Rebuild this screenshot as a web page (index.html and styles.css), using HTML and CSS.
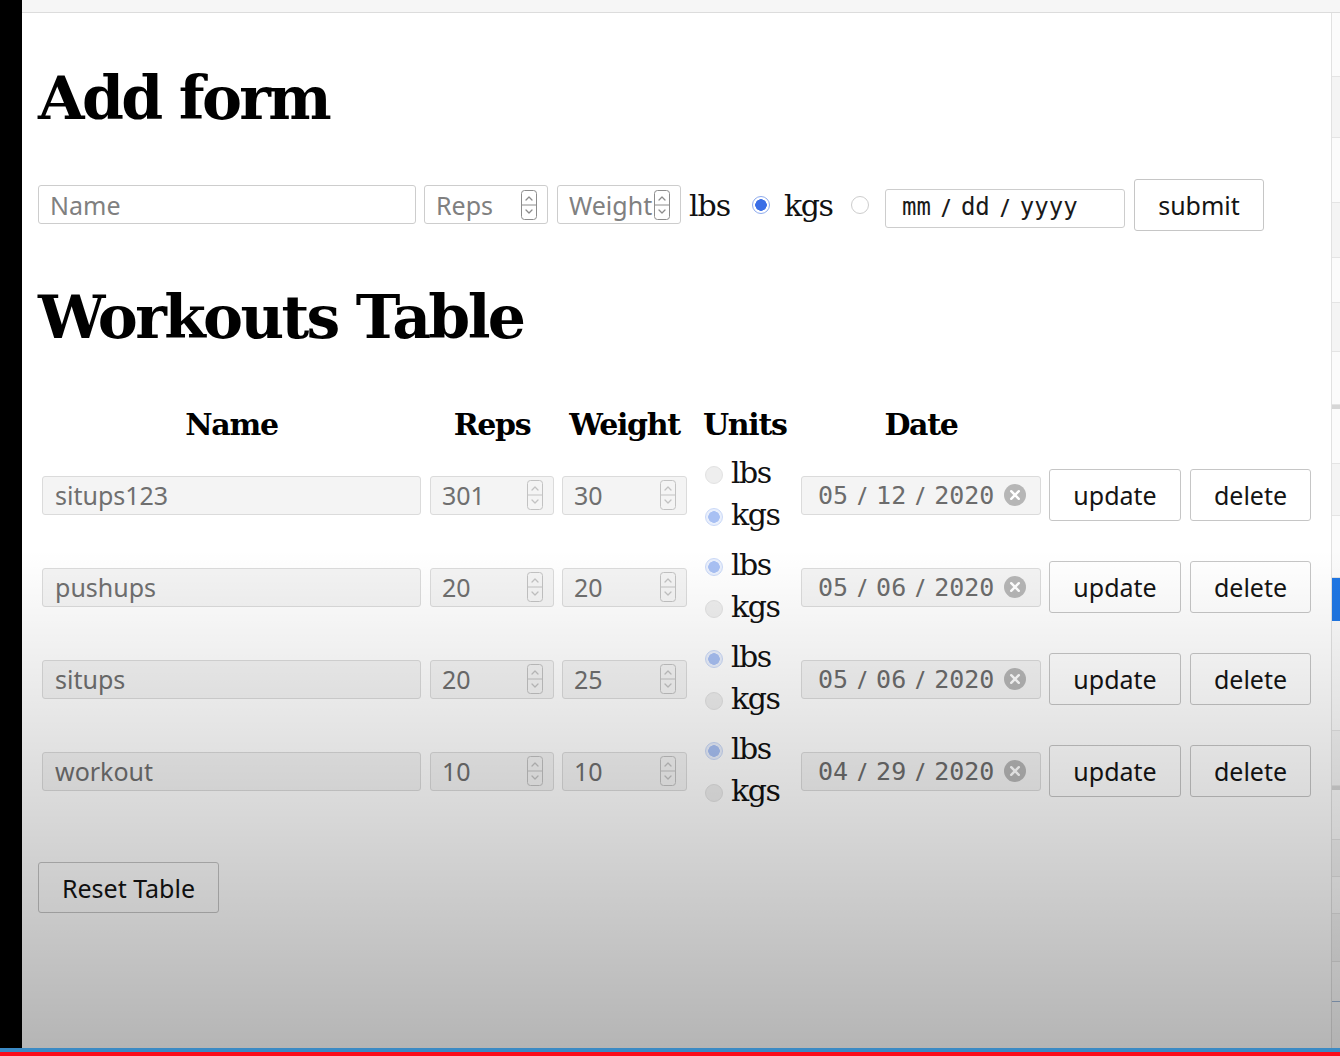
FILE: index.html
```html
<!DOCTYPE html>
<html lang="en">
<head>
<meta charset="utf-8">
<title>Workouts</title>
<link rel="stylesheet" href="styles.css">
</head>
<body>
<div class="screen">
  <div class="stage">
    <div class="leftbar"></div>
    <div class="window">
      <div class="toolbar"></div>
      <div class="viewport">
        <main class="page">
          <h1 class="title title-add">Add form</h1>
          <form class="add-form">
            <input class="field f-name" type="text" placeholder="Name">
            <div class="field num f-reps">
              <input class="num-input" type="text" placeholder="Reps">
              <svg class="spin" viewBox="0 0 16 30" width="16" height="30"><rect x="0.5" y="0.5" width="15" height="29" rx="3"/><line x1="0.5" y1="15" x2="15.5" y2="15"/><polyline points="5,10 8,7 11,10"/><polyline points="5,20 8,23 11,20"/></svg>
            </div>
            <div class="field num f-weight">
              <input class="num-input" type="text" placeholder="Weight">
              <svg class="spin" viewBox="0 0 16 30" width="16" height="30"><rect x="0.5" y="0.5" width="15" height="29" rx="3"/><line x1="0.5" y1="15" x2="15.5" y2="15"/><polyline points="5,10 8,7 11,10"/><polyline points="5,20 8,23 11,20"/></svg>
            </div>
            <span class="unit-label u-lbs">lbs</span>
            <input class="radio r-lbs" type="radio" name="unit" checked>
            <span class="unit-label u-kgs">kgs</span>
            <input class="radio r-kgs" type="radio" name="unit">
            <div class="field date f-date">
              <span class="seg">mm</span><span class="sep">/</span><span class="seg">dd</span><span class="sep">/</span><span class="seg">yyyy</span>
            </div>
            <button class="btn b-submit" type="button">submit</button>
          </form>

          <h1 class="title title-table">Workouts Table</h1>

          <div class="table">
            <div class="th c-name">Name</div>
            <div class="th c-reps">Reps</div>
            <div class="th c-weight">Weight</div>
            <div class="th c-units">Units</div>
            <div class="th c-date">Date</div>
            <div class="th"></div>
            <div class="th"></div>

            <input class="field dis c-name" type="text" value="situps123" disabled>
            <div class="field num dis c-reps"><input class="num-input" type="text" value="301" disabled><svg class="spin" viewBox="0 0 16 30" width="16" height="30"><rect x="0.5" y="0.5" width="15" height="29" rx="3"/><line x1="0.5" y1="15" x2="15.5" y2="15"/><polyline points="5,10 8,7 11,10"/><polyline points="5,20 8,23 11,20"/></svg></div>
            <div class="field num dis c-weight"><input class="num-input" type="text" value="30" disabled><svg class="spin" viewBox="0 0 16 30" width="16" height="30"><rect x="0.5" y="0.5" width="15" height="29" rx="3"/><line x1="0.5" y1="15" x2="15.5" y2="15"/><polyline points="5,10 8,7 11,10"/><polyline points="5,20 8,23 11,20"/></svg></div>
            <div class="units"><label class="uline"><input class="radio dis" type="radio" name="u1" disabled>lbs</label><label class="uline"><input class="radio dis" type="radio" name="u1" checked disabled>kgs</label></div>
            <div class="field date dis c-date"><span class="seg">05</span><span class="sep">/</span><span class="seg">12</span><span class="sep">/</span><span class="seg">2020</span><svg class="clear" viewBox="0 0 22 22" width="22" height="22"><circle cx="11" cy="11" r="11"/><path d="M7.2 7.2 L14.8 14.8 M14.8 7.2 L7.2 14.8"/></svg></div>
            <button class="btn b-update" type="button">update</button>
            <button class="btn b-delete" type="button">delete</button>

            <input class="field dis c-name" type="text" value="pushups" disabled>
            <div class="field num dis c-reps"><input class="num-input" type="text" value="20" disabled><svg class="spin" viewBox="0 0 16 30" width="16" height="30"><rect x="0.5" y="0.5" width="15" height="29" rx="3"/><line x1="0.5" y1="15" x2="15.5" y2="15"/><polyline points="5,10 8,7 11,10"/><polyline points="5,20 8,23 11,20"/></svg></div>
            <div class="field num dis c-weight"><input class="num-input" type="text" value="20" disabled><svg class="spin" viewBox="0 0 16 30" width="16" height="30"><rect x="0.5" y="0.5" width="15" height="29" rx="3"/><line x1="0.5" y1="15" x2="15.5" y2="15"/><polyline points="5,10 8,7 11,10"/><polyline points="5,20 8,23 11,20"/></svg></div>
            <div class="units"><label class="uline"><input class="radio dis" type="radio" name="u2" checked disabled>lbs</label><label class="uline"><input class="radio dis" type="radio" name="u2" disabled>kgs</label></div>
            <div class="field date dis c-date"><span class="seg">05</span><span class="sep">/</span><span class="seg">06</span><span class="sep">/</span><span class="seg">2020</span><svg class="clear" viewBox="0 0 22 22" width="22" height="22"><circle cx="11" cy="11" r="11"/><path d="M7.2 7.2 L14.8 14.8 M14.8 7.2 L7.2 14.8"/></svg></div>
            <button class="btn b-update" type="button">update</button>
            <button class="btn b-delete" type="button">delete</button>

            <input class="field dis c-name" type="text" value="situps" disabled>
            <div class="field num dis c-reps"><input class="num-input" type="text" value="20" disabled><svg class="spin" viewBox="0 0 16 30" width="16" height="30"><rect x="0.5" y="0.5" width="15" height="29" rx="3"/><line x1="0.5" y1="15" x2="15.5" y2="15"/><polyline points="5,10 8,7 11,10"/><polyline points="5,20 8,23 11,20"/></svg></div>
            <div class="field num dis c-weight"><input class="num-input" type="text" value="25" disabled><svg class="spin" viewBox="0 0 16 30" width="16" height="30"><rect x="0.5" y="0.5" width="15" height="29" rx="3"/><line x1="0.5" y1="15" x2="15.5" y2="15"/><polyline points="5,10 8,7 11,10"/><polyline points="5,20 8,23 11,20"/></svg></div>
            <div class="units"><label class="uline"><input class="radio dis" type="radio" name="u3" checked disabled>lbs</label><label class="uline"><input class="radio dis" type="radio" name="u3" disabled>kgs</label></div>
            <div class="field date dis c-date"><span class="seg">05</span><span class="sep">/</span><span class="seg">06</span><span class="sep">/</span><span class="seg">2020</span><svg class="clear" viewBox="0 0 22 22" width="22" height="22"><circle cx="11" cy="11" r="11"/><path d="M7.2 7.2 L14.8 14.8 M14.8 7.2 L7.2 14.8"/></svg></div>
            <button class="btn b-update" type="button">update</button>
            <button class="btn b-delete" type="button">delete</button>

            <input class="field dis c-name" type="text" value="workout" disabled>
            <div class="field num dis c-reps"><input class="num-input" type="text" value="10" disabled><svg class="spin" viewBox="0 0 16 30" width="16" height="30"><rect x="0.5" y="0.5" width="15" height="29" rx="3"/><line x1="0.5" y1="15" x2="15.5" y2="15"/><polyline points="5,10 8,7 11,10"/><polyline points="5,20 8,23 11,20"/></svg></div>
            <div class="field num dis c-weight"><input class="num-input" type="text" value="10" disabled><svg class="spin" viewBox="0 0 16 30" width="16" height="30"><rect x="0.5" y="0.5" width="15" height="29" rx="3"/><line x1="0.5" y1="15" x2="15.5" y2="15"/><polyline points="5,10 8,7 11,10"/><polyline points="5,20 8,23 11,20"/></svg></div>
            <div class="units"><label class="uline"><input class="radio dis" type="radio" name="u4" checked disabled>lbs</label><label class="uline"><input class="radio dis" type="radio" name="u4" disabled>kgs</label></div>
            <div class="field date dis c-date"><span class="seg">04</span><span class="sep">/</span><span class="seg">29</span><span class="sep">/</span><span class="seg">2020</span><svg class="clear" viewBox="0 0 22 22" width="22" height="22"><circle cx="11" cy="11" r="11"/><path d="M7.2 7.2 L14.8 14.8 M14.8 7.2 L7.2 14.8"/></svg></div>
            <button class="btn b-update" type="button">update</button>
            <button class="btn b-delete" type="button">delete</button>
          </div>

          <button class="btn b-reset" type="button">Reset Table</button>
        </main>
        <aside class="side">
          <div class="sg h64"></div>
          <div class="sg h61 alt"></div>
          <div class="sg h65"></div>
          <div class="sg h55 alt"></div>
          <div class="sg h45"></div>
          <div class="sg h49 alt"></div>
          <div class="sg h53"></div>
          <div class="sg thick"></div>
          <div class="sg h55"></div>
          <div class="sg h52 alt"></div>
          <div class="sg h62"></div>
          <div class="sg blue-seg"></div>
          <div class="sg h110"></div>
          <div class="sg h55 alt"></div>
          <div class="sg thick"></div>
          <div class="sg h50"></div>
          <div class="sg h37 alt"></div>
          <div class="sg h37"></div>
          <div class="sg h48 alt"></div>
          <div class="sg h40 bl"></div>
          <div class="sg h48"></div>
        </aside>
      </div>
    </div>
  </div>
  <div class="line-blue"></div>
  <div class="line-red"></div>
  <div class="fade"></div>
</div>
</body>
</html>
```

FILE: styles.css
```css
* { box-sizing: border-box; }
html, body { margin: 0; padding: 0; }
body {
  width: 1340px;
  height: 1056px;
  overflow: hidden;
  background: #000;
  font-family: "DejaVu Serif", serif;
  color: #111;
}
.screen {
  position: relative;
  width: 1340px;
  height: 1056px;
  display: flex;
  flex-direction: column;
}
.stage { display: flex; height: 1048px; flex: none; }
.leftbar { width: 22px; background: #000; flex: none; }
.window { flex: 1; display: flex; flex-direction: column; background: #fff; min-width: 0; }
.toolbar { height: 13px; flex: none; background: #f6f6f6; border-bottom: 1px solid #dcdcdc; }
.viewport { flex: 1; display: flex; min-height: 0; }
.page { flex: 1; padding-left: 16px; min-width: 0; }
.line-blue { height: 4px; background: #3b8ac4; flex: none; }
.line-red { height: 4px; background: #fb0d1b; flex: none; }
.fade {
  position: absolute;
  left: 0; top: 0;
  width: 1340px; height: 1048px;
  pointer-events: none;
  background: linear-gradient(to bottom, rgba(0,0,0,0) 0px, rgba(0,0,0,0) 550px, rgba(0,0,0,0.29) 1048px);
}

/* headings */
.title {
  margin: 0;
  font: bold 60px/70px "DejaVu Serif", serif;
  letter-spacing: -2.65px;
  color: #000;
}
.title-add { margin-top: 50px; }
.title-table { margin-top: 51px; }

/* common fields */
.field {
  height: 39px;
  border: 1px solid #cdcdcd;
  border-radius: 3px;
  background: #fff;
  font: 25px "Noto Sans", sans-serif;
  color: #222;
  padding: 0 12px;
  margin: 0;
  outline: none;
}
input.field { display: block; }
.f-name { padding-left: 11px; }
.field::placeholder, .num-input::placeholder { color: #808080; opacity: 1; }

.num { display: flex; align-items: center; padding: 0 10px 0 11px; }
.num-input {
  flex: 1;
  min-width: 0;
  border: 0;
  padding: 0;
  margin: 0;
  background: transparent;
  font: 25px "Noto Sans", sans-serif;
  color: #222;
  outline: none;
}
.spin { flex: none; fill: none; stroke: #8c8c8c; stroke-width: 1; }
.spin polyline { stroke-width: 1.3; stroke-linecap: round; stroke-linejoin: round; }

/* add form row */
.add-form {
  display: flex;
  align-items: flex-start;
  height: 52px;
  margin-top: 46px;
}
.f-name { width: 378px; margin-top: 6px; }
.f-reps { width: 124px; margin-left: 8px; margin-top: 6px; }
.f-weight { width: 124px; margin-left: 9px; margin-top: 6px; }
.unit-label { font: 30px/36px "DejaVu Serif", serif; color: #111; white-space: nowrap; }
.u-lbs { width: 42px; margin-left: 8px; margin-top: 9px; letter-spacing: -1px; }
.u-kgs { width: 46px; margin-left: 14px; margin-top: 9px; letter-spacing: -1.5px; }
.radio {
  appearance: none;
  -webkit-appearance: none;
  flex: none;
  width: 18px;
  height: 18px;
  margin: 0;
  border-radius: 50%;
  border: 1px solid #cdcdcd;
  background: #fff;
}
.radio:checked {
  border: 1.5px solid #8eabee;
  background: radial-gradient(circle, #3a6ee6 0 5.5px, #ffffff 6px);
}
.r-lbs { margin-left: 21px; margin-top: 17px; }
.r-kgs { margin-left: 21px; margin-top: 17px; }

.date { display: flex; align-items: center; padding: 0 0 0 16px; }
.seg { font: 25px "DejaVu Sans Mono", monospace; letter-spacing: 0; }
.sep { width: 28px; text-align: center; font: 25px "Noto Sans", sans-serif; }
.f-date { width: 240px; margin-left: 16px; margin-top: 10px; color: #1a1a1a; padding-bottom: 4px; }
.f-date .seg { font-size: 24px; }
.f-date .sep { width: 30px; }

.btn {
  height: 52px;
  margin: 0;
  padding: 0;
  border: 1px solid #c6c6c6;
  border-radius: 3px;
  background: #fff;
  font: 25px "Noto Sans", sans-serif;
  color: #141414;
}
.b-submit { width: 130px; margin-left: 9px; }

/* table */
.table {
  display: grid;
  grid-template-columns: 388px 132px 141px 98px 248px 141px 121px;
  grid-template-rows: 44px repeat(4, 92px);
  align-items: center;
  margin-top: 53px;
  margin-left: 4px;
}
.th {
  align-self: start;
  font: bold 30px/40px "DejaVu Serif", serif;
  color: #000;
  text-align: center;
  letter-spacing: -1.3px;
}
.c-name { width: 379px; }
.c-reps { width: 124px; }
.c-weight { width: 125px; }
.c-units { width: 82px; }
.c-date { width: 240px; }

.dis { background: #f4f4f4; border-color: #dbdbdb; color: #6f6f6f; }
input.dis { -webkit-text-fill-color: #6f6f6f; }
.dis .num-input { color: #6f6f6f; -webkit-text-fill-color: #6f6f6f; }
.dis .spin { stroke: #c2c2c2; }

.units { display: flex; flex-direction: column; padding-bottom: 2px; margin-left: 2px; }
.uline {
  display: flex;
  align-items: center;
  gap: 8px;
  height: 42px;
  font: 30px/42px "DejaVu Serif", serif;
  color: #111;
  letter-spacing: -1.5px;
}
.uline .radio { margin-top: 4px; }
.radio.dis { background: #eeeeee; border-color: #e2e2e2; }
.radio.dis:checked {
  border: 1.5px solid #c9d8f7;
  background: radial-gradient(circle, #a8c0f3 0 5.5px, #e9effc 6px);
}

.date.dis .seg { color: #6c6c6c; }
.date.dis .sep { color: #6c6c6c; }
.clear { margin-left: 10px; flex: none; }
.clear circle { fill: #b6b6b6; }
.clear path { stroke: #fff; stroke-width: 2.4; stroke-linecap: round; }

.b-update { width: 132px; }
.b-delete { width: 121px; }
.b-reset { display: block; width: 181px; height: 51px; margin-top: 45px; }

/* right side strip */
.side {
  width: 9px;
  flex: none;
  border-left: 1px solid #e1e1e1;
  background: #fbfbfb;
  display: flex;
  flex-direction: column;
}
.sg { flex: none; border-bottom: 1px solid #e4e4e4; }
.sg.alt { background: #f4f4f4; }
.sg.thick { height: 4px; background: #d6d6d6; border: 0; }
.sg.blue-seg { height: 43px; background: #1f77e5; border: 0; }
.sg.bl { border-bottom-color: #9fb7d8; }
.h37 { height: 37px; }
.h40 { height: 40px; }
.h45 { height: 45px; }
.h48 { height: 48px; }
.h49 { height: 49px; }
.h50 { height: 50px; }
.h52 { height: 52px; }
.h53 { height: 53px; }
.h55 { height: 55px; }
.h61 { height: 61px; }
.h62 { height: 62px; }
.h64 { height: 64px; }
.h65 { height: 65px; }
.h110 { height: 110px; }
```
